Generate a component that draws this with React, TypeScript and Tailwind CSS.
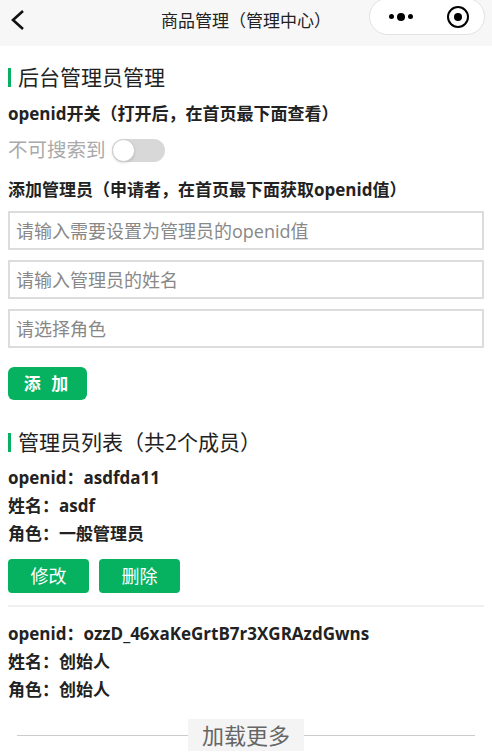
import { useState } from 'react';

// ─── Types ─────────────────────────────────────

interface Admin {
  openid: string;
  name: string;
  role: string;
  editable: boolean;
}

const admins: Admin[] = [
  { openid: 'asdfda11', name: 'asdf', role: '一般管理员', editable: true },
  { openid: 'ozzD_46xaKeGrtB7r3XGRAzdGwns', name: '创始人', role: '创始人', editable: false },
];

const font = { fontFamily: '"Open Sans", "Noto Sans CJK SC", sans-serif' };

// ─── Pieces ────────────────────────────────────

function NavBar() {
  return (
    <div className="relative flex h-[46px] items-center justify-center bg-[#f7f7f7]">
      <svg className="absolute left-[9px] top-[9px]" width="18" height="22" viewBox="0 0 18 22">
        <path d="M14 2 L4 11 L14 20" fill="none" stroke="#111" strokeWidth="2.6" />
      </svg>
      <span className="-mt-1 text-[17px] text-[#222]">商品管理（管理中心）</span>
      <div className="absolute right-[7px] top-[-2px] flex h-[37px] w-[116px] items-center rounded-full border border-[#e2e2e2] bg-white">
        <div className="flex w-[58px] items-center justify-center gap-[3px] pl-1">
          <span className="h-[5px] w-[5px] rounded-full bg-black" />
          <span className="h-[8px] w-[8px] rounded-full bg-black" />
          <span className="h-[5px] w-[5px] rounded-full bg-black" />
        </div>
        <div className="flex flex-1 items-center justify-center pl-1">
          <span className="flex h-[22px] w-[22px] items-center justify-center rounded-full border-[2.5px] border-black">
            <span className="h-[8px] w-[8px] rounded-full bg-black" />
          </span>
        </div>
      </div>
    </div>
  );
}

function Heading({ children }: { children: React.ReactNode }) {
  return (
    <div className="flex items-center gap-[7px]">
      <span className="h-[19px] w-[3px] bg-[#07b060]" />
      <span className="text-[21px] leading-[28px] text-[#222]">{children}</span>
    </div>
  );
}

function GreenButton({ children, wide }: { children: React.ReactNode; wide?: boolean }) {
  return (
    <button
      className={
        wide
          ? 'h-[34px] w-[81px] rounded-[4px] bg-[#06b160] text-[18px] text-white'
          : 'h-[33px] w-[79px] rounded-[6px] bg-[#06b160] text-[17px] font-bold tracking-[3px] text-white'
      }
    >
      {children}
    </button>
  );
}

// ─── Component ─────────────────────────────────

export default function App() {
  const [on, setOn] = useState(false);

  return (
    <div className="min-h-[755px] bg-white" style={font}>
      <NavBar />

      <div className="px-2 pt-[17px]">
        {/* Add admin */}
        <Heading>后台管理员管理</Heading>
        <p className="mt-[11px] text-[17px] font-bold leading-[24px] text-[#222]">openid开关（打开后，在首页最下面查看）</p>
        <div className="mt-[11px] flex items-center gap-[6px]">
          <span className="text-[19.5px] leading-[26px] text-[#aaa]">不可搜索到</span>
          <button
            onClick={() => setOn(!on)}
            className="relative h-[23px] w-[53px] rounded-full bg-[#d8d8d8]"
          >
            <span className="absolute left-0 top-0 h-[23px] w-[23px] rounded-full border border-[#ccc] bg-white shadow" />
          </button>
        </div>
        <p className="mt-[15px] text-[17px] font-bold leading-[24px] text-[#222]">添加管理员（申请者，在首页最下面获取openid值）</p>

        <div className="mt-[9px] flex flex-col gap-[10px]">
          {['请输入需要设置为管理员的openid值', '请输入管理员的姓名', '请选择角色'].map((p) => (
            <input
              key={p}
              placeholder={p}
              className="h-[39px] w-full border-2 border-[#dcdcdc] px-[6px] text-[18px] outline-none placeholder:text-[#888]"
            />
          ))}
        </div>

        <div className="mt-[19px]">
          <GreenButton>添 加</GreenButton>
        </div>

        {/* Admin list */}
        <div className="mt-[28px]">
          <Heading>管理员列表（共2个成员）</Heading>
        </div>

        {admins.map((a, i) => (
          <div
            key={a.openid}
            className={i === 0 ? 'mt-[8px] border-b-2 border-[#f0f0f0] pb-[12px]' : 'mt-[13px]'}
          >
            <div className="text-[17px] font-bold leading-[28px] text-[#222]">
              <p>openid：{a.openid}</p>
              <p>姓名：{a.name}</p>
              <p>角色：{a.role}</p>
            </div>
            {a.editable && (
              <div className="mt-[11px] flex gap-[10px]">
                <GreenButton wide>修改</GreenButton>
                <GreenButton wide>删除</GreenButton>
              </div>
            )}
          </div>
        ))}

        {/* Load more */}
        <div className="mt-[15px] flex items-center px-[9px]">
          <span className="h-px flex-1 bg-[#ccc]" />
          <span className="bg-[#f4f4f4] px-[14px] text-[22px] leading-[32px] text-[#666]">加载更多</span>
          <span className="h-px flex-1 bg-[#ccc]" />
        </div>
      </div>
    </div>
  );
}
